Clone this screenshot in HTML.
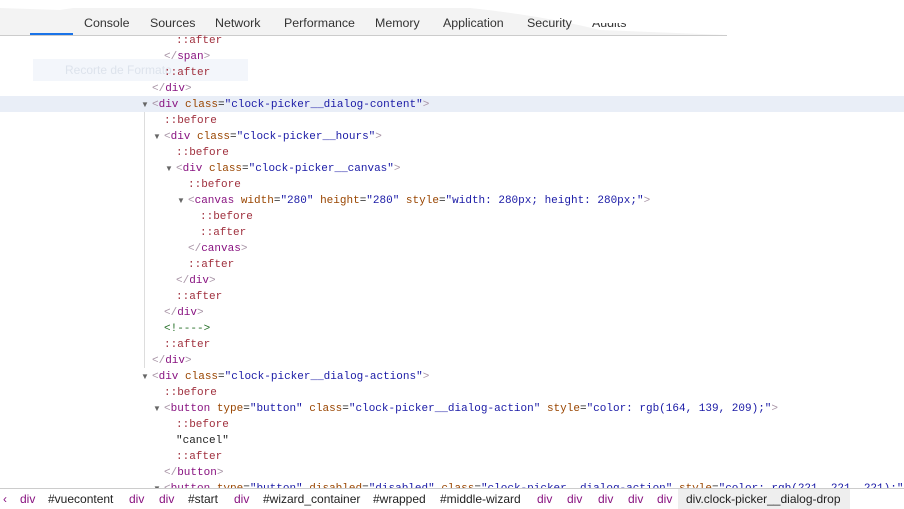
<!DOCTYPE html>
<html><head><meta charset="utf-8"><style>
*{margin:0;padding:0;box-sizing:border-box}
body{width:904px;height:509px;background:#fff;position:relative;overflow:hidden;font-family:"Liberation Sans",sans-serif}
.tabs{position:absolute;left:0;top:8px;width:727px;height:28px;background:#f3f3f3;border-bottom:1px solid #ccc}
.tab{position:absolute;top:23px;transform:translateY(-50%);font-size:12.4px;color:#333;white-space:nowrap}
.sel{position:absolute;left:30px;top:33px;width:43px;height:2px;background:#1a73e8}
.l{position:absolute;font-family:"Liberation Mono",monospace;font-size:11px;line-height:16px;height:16px;white-space:pre;color:#222;margin-top:1px}
.t{color:#881280}.b{color:#a894a6}.a{color:#994500}.v{color:#1a1aa6}.p{color:#a0303e}.c{color:#236e25}
.ar{position:absolute;font-size:8px;color:#666;line-height:16px;margin-top:1px}
.hl{position:absolute;left:0;top:96px;width:904px;height:16px;background:#e9eef7}
.guide{position:absolute;left:144px;top:112px;width:1px;height:256px;background:#ddd}
.bc{position:absolute;left:0;top:488px;width:904px;height:21px;border-top:1px solid #ccc;background:#fff}
.bi{position:absolute;top:499px;transform:translateY(-50%);font-size:12px;color:#881280;white-space:nowrap}
.bi.d{color:#222}
</style></head><body>
<div class="tabs"></div>
<svg style="position:absolute;left:0;top:0" width="904" height="36"><path d="M0 0 L904 0 L904 36 L727 36 L727 35 L600 30 Q480 0 300 0 Q120 0 60 10 L0 8 Z" fill="#fff"/></svg>
<div class="sel"></div>
<div class="tab" style="left:84px">Console</div>
<div class="tab" style="left:150px">Sources</div>
<div class="tab" style="left:215px">Network</div>
<div class="tab" style="left:284px">Performance</div>
<div class="tab" style="left:375px">Memory</div>
<div class="tab" style="left:443px">Application</div>
<div class="tab" style="left:527px">Security</div>
<div class="tab" style="left:592px;clip-path:inset(50% 0 0 0)">Audits</div>

<div class="hl"></div>
<div class="guide"></div>
<div style="position:absolute;left:33px;top:59px;width:215px;height:22px;background:rgba(235,240,248,.6)"></div>
<div style="position:absolute;left:65px;top:63px;font-size:12px;color:#dde3ec">Recorte de Formato</div>

<div class="l" style="left:176px;top:32px"><span class="p">::after</span></div>
<div class="l" style="left:164px;top:48px"><span class="b">&lt;/</span><span class="t">span</span><span class="b">&gt;</span></div>
<div class="l" style="left:164px;top:64px"><span class="p">::after</span></div>
<div class="l" style="left:152px;top:80px"><span class="b">&lt;/</span><span class="t">div</span><span class="b">&gt;</span></div>
<div class="ar" style="left:141px;top:96px">▼</div>
<div class="l" style="left:152px;top:96px"><span class="b">&lt;</span><span class="t">div</span> <span class="a">class</span>=<span class="v">"clock-picker__dialog-content"</span><span class="b">&gt;</span></div>
<div class="l" style="left:164px;top:112px"><span class="p">::before</span></div>
<div class="ar" style="left:153px;top:128px">▼</div>
<div class="l" style="left:164px;top:128px"><span class="b">&lt;</span><span class="t">div</span> <span class="a">class</span>=<span class="v">"clock-picker__hours"</span><span class="b">&gt;</span></div>
<div class="l" style="left:176px;top:144px"><span class="p">::before</span></div>
<div class="ar" style="left:165px;top:160px">▼</div>
<div class="l" style="left:176px;top:160px"><span class="b">&lt;</span><span class="t">div</span> <span class="a">class</span>=<span class="v">"clock-picker__canvas"</span><span class="b">&gt;</span></div>
<div class="l" style="left:188px;top:176px"><span class="p">::before</span></div>
<div class="ar" style="left:177px;top:192px">▼</div>
<div class="l" style="left:188px;top:192px"><span class="b">&lt;</span><span class="t">canvas</span> <span class="a">width</span>=<span class="v">"280"</span> <span class="a">height</span>=<span class="v">"280"</span> <span class="a">style</span>=<span class="v">"width: 280px; height: 280px;"</span><span class="b">&gt;</span></div>
<div class="l" style="left:200px;top:208px"><span class="p">::before</span></div>
<div class="l" style="left:200px;top:224px"><span class="p">::after</span></div>
<div class="l" style="left:188px;top:240px"><span class="b">&lt;/</span><span class="t">canvas</span><span class="b">&gt;</span></div>
<div class="l" style="left:188px;top:256px"><span class="p">::after</span></div>
<div class="l" style="left:176px;top:272px"><span class="b">&lt;/</span><span class="t">div</span><span class="b">&gt;</span></div>
<div class="l" style="left:176px;top:288px"><span class="p">::after</span></div>
<div class="l" style="left:164px;top:304px"><span class="b">&lt;/</span><span class="t">div</span><span class="b">&gt;</span></div>
<div class="l" style="left:164px;top:320px"><span class="c">&lt;!----&gt;</span></div>
<div class="l" style="left:164px;top:336px"><span class="p">::after</span></div>
<div class="l" style="left:152px;top:352px"><span class="b">&lt;/</span><span class="t">div</span><span class="b">&gt;</span></div>
<div class="ar" style="left:141px;top:368px">▼</div>
<div class="l" style="left:152px;top:368px"><span class="b">&lt;</span><span class="t">div</span> <span class="a">class</span>=<span class="v">"clock-picker__dialog-actions"</span><span class="b">&gt;</span></div>
<div class="l" style="left:164px;top:384px"><span class="p">::before</span></div>
<div class="ar" style="left:153px;top:400px">▼</div>
<div class="l" style="left:164px;top:400px"><span class="b">&lt;</span><span class="t">button</span> <span class="a">type</span>=<span class="v">"button"</span> <span class="a">class</span>=<span class="v">"clock-picker__dialog-action"</span> <span class="a">style</span>=<span class="v">"color: rgb(164, 139, 209);"</span><span class="b">&gt;</span></div>
<div class="l" style="left:176px;top:416px"><span class="p">::before</span></div>
<div class="l" style="left:176px;top:432px">"cancel"</div>
<div class="l" style="left:176px;top:448px"><span class="p">::after</span></div>
<div class="l" style="left:164px;top:464px"><span class="b">&lt;/</span><span class="t">button</span><span class="b">&gt;</span></div>
<div class="ar" style="left:153px;top:480px">▼</div>
<div class="l" style="left:164px;top:480px"><span class="b">&lt;</span><span class="t">button</span> <span class="a">type</span>=<span class="v">"button"</span> <span class="a">disabled</span>=<span class="v">"disabled"</span> <span class="a">class</span>=<span class="v">"clock-picker__dialog-action"</span> <span class="a">style</span>=<span class="v">"color: rgb(221, 221, 221);"</span><span class="b">&gt;</span></div>

<div class="bc"></div>
<div style="position:absolute;left:678px;top:489px;width:172px;height:20px;background:#eee"></div>
<div class="bi" style="left:3px">‹</div>
<div class="bi" style="left:20px">div</div>
<div class="bi d" style="left:48px">#vuecontent</div>
<div class="bi" style="left:129px">div</div>
<div class="bi" style="left:159px">div</div>
<div class="bi d" style="left:188px">#start</div>
<div class="bi" style="left:234px">div</div>
<div class="bi d" style="left:263px">#wizard_container</div>
<div class="bi d" style="left:373px">#wrapped</div>
<div class="bi d" style="left:440px">#middle-wizard</div>
<div class="bi" style="left:537px">div</div>
<div class="bi" style="left:567px">div</div>
<div class="bi" style="left:598px">div</div>
<div class="bi" style="left:628px">div</div>
<div class="bi" style="left:657px">div</div>
<div class="bi d" style="left:686px">div.clock-picker__dialog-drop</div>
</body></html>
